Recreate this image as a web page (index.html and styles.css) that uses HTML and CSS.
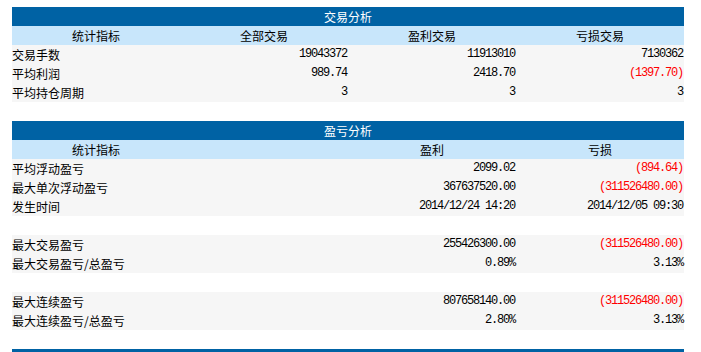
FILE: index.html
```html
<!DOCTYPE html>
<html lang="zh-CN">
<head>
<meta charset="utf-8">
<title>交易分析</title>
<link rel="stylesheet" href="styles.css">
</head>
<body>
<table class="stats">
  <colgroup><col><col><col><col></colgroup>
  <tr class="title"><th colspan="4">交易分析</th></tr>
  <tr class="head"><th>统计指标</th><th>全部交易</th><th>盈利交易</th><th>亏损交易</th></tr>
  <tr class="row"><td class="label">交易手数</td><td class="num">19043372</td><td class="num">11913010</td><td class="num">7130362</td></tr>
  <tr class="row"><td class="label">平均利润</td><td class="num">989.74</td><td class="num">2418.70</td><td class="num neg">(1397.70)</td></tr>
  <tr class="row"><td class="label">平均持仓周期</td><td class="num">3</td><td class="num">3</td><td class="num">3</td></tr>
</table>

<table class="stats">
  <colgroup><col><col><col><col></colgroup>
  <tr class="title"><th colspan="4">盈亏分析</th></tr>
  <tr class="head"><th>统计指标</th><th></th><th>盈利</th><th>亏损</th></tr>
  <tr class="row"><td class="label">平均浮动盈亏</td><td></td><td class="num">2099.02</td><td class="num neg">(894.64)</td></tr>
  <tr class="row"><td class="label">最大单次浮动盈亏</td><td></td><td class="num">367637520.00</td><td class="num neg">(311526480.00)</td></tr>
  <tr class="row"><td class="label">发生时间</td><td></td><td class="num">2014/12/24 14:20</td><td class="num">2014/12/05 09:30</td></tr>
  <tr class="gap"><td colspan="4"></td></tr>
  <tr class="row"><td class="label">最大交易盈亏</td><td></td><td class="num">255426300.00</td><td class="num neg">(311526480.00)</td></tr>
  <tr class="row"><td class="label">最大交易盈亏/总盈亏</td><td></td><td class="num">0.89%</td><td class="num">3.13%</td></tr>
  <tr class="gap"><td colspan="4"></td></tr>
  <tr class="row"><td class="label">最大连续盈亏</td><td></td><td class="num">807658140.00</td><td class="num neg">(311526480.00)</td></tr>
  <tr class="row"><td class="label">最大连续盈亏/总盈亏</td><td></td><td class="num">2.80%</td><td class="num">3.13%</td></tr>
</table>

<table class="stats last">
  <tr class="title"><th>&nbsp;</th></tr>
</table>
</body>
</html>
```
FILE: styles.css
```css
html, body {
  background: #ffffff;
}
body {
  margin: 7px 0 0 12px;
  font-family: "Noto Sans CJK SC", sans-serif;
  font-size: 12px;
  color: #000000;
}
.stats {
  width: 672px;
  border-collapse: collapse;
  table-layout: fixed;
  margin-bottom: 19px;
}
.stats.last {
  margin-bottom: 0;
}
.stats col {
  width: 25%;
}
.stats th,
.stats td {
  height: 19px;
  padding: 0;
  line-height: 19px;
  font-weight: normal;
  white-space: nowrap;
}
.title th {
  background: #0062a4;
  color: #ffffff;
  text-align: center;
}
.head th {
  background: #c8e6fb;
  text-align: center;
}
.row td {
  background: #f6f6f6;
}
.label {
  text-align: left;
  padding-left: 1px;
}
.stats .num {
  text-align: right;
  font-family: "Liberation Mono", monospace;
  letter-spacing: -1.2px;
  padding-right: 1px;
}
.neg {
  color: #ff0000;
}
.gap td {
  background: #ffffff;
}
```
